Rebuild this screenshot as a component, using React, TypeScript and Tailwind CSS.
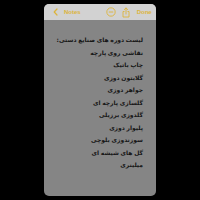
const ITEMS = [
  "لیست دوره های صنایع دستی:",
  "نقاشی روی پارچه",
  "چاپ باتیک",
  "گلابتون دوزی",
  "جواهر دوزی",
  "گلسازی پارچه ای",
  "گلدوزی برزیلی",
  "پلیوار دوزی",
  "سوزندوزی بلوچی",
  "گل های شیشه ای",
  "میلینری",
];

export default function App() {
  return (
    <div className="w-[200px] h-[200px] bg-black pt-[4px] pl-[44px]">
      <div className="w-[112px] h-[192px] rounded-[5px] overflow-hidden bg-[#858585] flex flex-col">
        {/* toolbar */}
        <div
          className="h-[16px] shrink-0 bg-[#d2d2d2] flex items-center text-[#dcb43c] text-[6px] font-bold"
          style={{ fontFamily: '"Liberation Sans", Arial, sans-serif' }}
        >
          <svg width="5" height="8" viewBox="0 0 5 8" className="ml-[9px] shrink-0">
            <path d="M4 1 L1.2 4 L4 7" fill="none" stroke="#dcb43c" strokeWidth="1.2" strokeLinecap="round" strokeLinejoin="round" />
          </svg>
          <span className="ml-[6px]">Notes</span>
          <svg width="10" height="10" viewBox="0 0 10 10" className="ml-[25px] shrink-0">
            <circle cx="5" cy="5" r="4.2" fill="none" stroke="#dcb43c" strokeWidth="0.9" />
            <path d="M2.8 5 H7.2" stroke="#dcb43c" strokeWidth="0.9" />
          </svg>
          <svg width="8" height="11" viewBox="0 0 8 11" className="ml-[6px] shrink-0">
            <path d="M2.5 4.5 H1 V10 H7 V4.5 H5.5" fill="none" stroke="#dcb43c" strokeWidth="0.9" />
            <path d="M4 7 V1 M2.3 2.6 L4 1 L5.7 2.6" fill="none" stroke="#dcb43c" strokeWidth="0.9" strokeLinecap="round" />
          </svg>
          <span className="ml-[7px]">Done</span>
        </div>
        {/* note body */}
        <div
          dir="rtl"
          className="flex flex-col pt-[14px] pr-[13px] text-[6px] leading-[12.5px] font-bold text-[#151515] whitespace-nowrap [word-spacing:-0.4px]"
          style={{ fontFamily: '"DejaVu Sans", "Noto Sans", sans-serif' }}
        >
          {ITEMS.map((t, i) => (
            <div key={i}>{t}</div>
          ))}
        </div>
      </div>
    </div>
  );
}
